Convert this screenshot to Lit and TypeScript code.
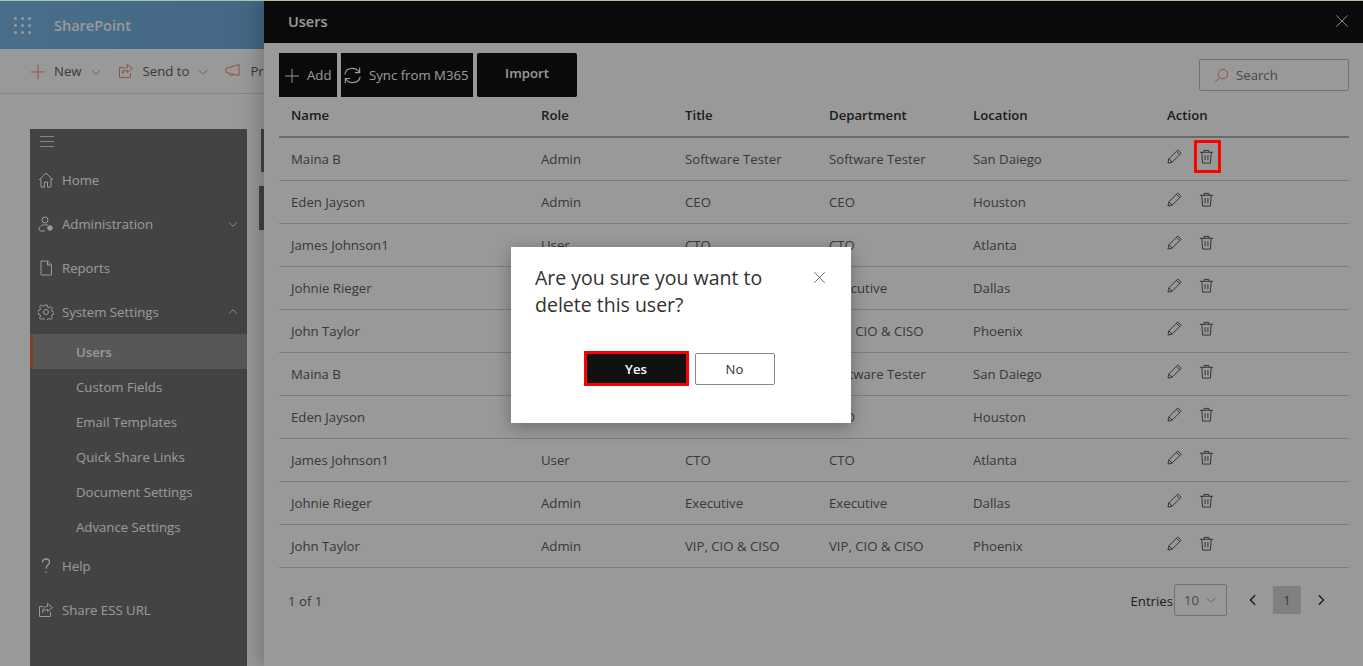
import { html, css, LitElement, svg } from "lit"
import { customElement } from "lit/decorators.js"

const users = [
  ["Maina B", "Admin", "Software Tester", "Software Tester", "San Daiego"],
  ["Eden Jayson", "Admin", "CEO", "CEO", "Houston"],
  ["James Johnson1", "User", "CTO", "CTO", "Atlanta"],
  ["Johnie Rieger", "Admin", "Executive", "Executive", "Dallas"],
  ["John Taylor", "Admin", "VIP, CIO & CISO", "VIP, CIO & CISO", "Phoenix"],
]
const rows = [...users, ...users]

const icon = (body: unknown, size = 16) => html`
  <svg width=${size} height=${size} viewBox="0 0 16 16" fill="none" stroke="currentColor" stroke-width="1">${body}</svg>
`

const icons = {
  plus: svg`<path d="M8.500 1v15M1 8.500h15"/>`,
  chevronDown: svg`<path d="M2.500 5.500L8 11l5.500-5.500"/>`,
  chevronUp: svg`<path d="M2.500 10.500L8 5l5.500 5.500"/>`,
  share: svg`<path d="M12.500 10v4.500h-11v-10h4"/><path d="M9.500 1.500l5 4-5 4V7.500c-2.500 0-4 1-5 3 0-3.500 2-6 5-6z"/>`,
  megaphone: svg`<path d="M1 5.500l13-4v11l-13-3zM4 10c0 3 4 3.500 4.500 1"/>`,
  home: svg`<path d="M1 8l7-7 7 7M3 6.500v8.500h3.500v-5h3v5H13V6.500"/>`,
  admin: svg`<circle cx="7" cy="4" r="3"/><path d="M10 9.300C8 8.300 1.500 8 1 13.500c0 1 1 1.500 2 1.500h4"/><circle cx="12" cy="12" r="2.300" fill="currentColor"/>`,
  page: svg`<path d="M3 1h6.500L13.500 5v10H3zM9.500 1v4h4"/>`,
  gear: svg`<circle cx="8" cy="8" r="2.500"/><path d="M6.800 1h2.400l.4 2 1.500.7 1.800-1.100 1.600 1.700-1.100 1.700.6 1.500 2 .5v2.300l-2 .4-.6 1.500 1.100 1.800-1.600 1.600-1.800-1.100-1.500.6-.4 2H6.800l-.4-2-1.500-.6-1.800 1.100-1.600-1.600 1.100-1.800-.6-1.500-2-.4V6.500l2-.5.6-1.500-1.100-1.700 1.600-1.700 1.800 1.100 1.500-.7z"/>`,
  help: svg`<path d="M4.500 4.500C4.500 2 6 1 8 1s3.500 1.200 3.500 3.200C11.500 7 8 7 8 10.500M8 13.500v1.500" stroke-width="1.300"/>`,
  sync: svg`<path d="M1.500 7C2 4 4.500 2 8 2c2.500 0 4.500 1.200 5.500 3M14.500 9c-.5 3-3 5-6.500 5-2.500 0-4.500-1.200-5.500-3"/><path d="M14 1.500V5.500h-4M2 14.500V10.500h4"/>`,
  search: svg`<circle cx="9.500" cy="6.500" r="5"/><path d="M6 10l-5 5"/>`,
  close: svg`<path d="M1.500 1.500l13 13M14.500 1.500l-13 13"/>`,
  pencil: svg`<path d="M1 15l1-4.500L11.500 1l3.500 3.500L5.500 14zM2 10.500l3.500 3.500M10 2.500L13.500 6"/>`,
  trash: svg`<path d="M1 3.500h14M5.500 3.500V1.500h5v2M3 3.500l.8 11.500h8.400L13 3.500M6.500 6.500v5.500M9.500 6.500v5.500"/>`,
  back: svg`<path d="M10.500 2.500L5 8l5.500 5.500" stroke-width="1.600"/>`,
  next: svg`<path d="M5.500 2.500L11 8l-5.500 5.500" stroke-width="1.600"/>`,
}

@customElement("app-root")
class AppRoot extends LitElement {
  static styles = css`
    :host {
      display: block;
      height: 666px;
      overflow: hidden;
      background: #a9c79c;
      padding-top: 1px;
      box-sizing: border-box;
      font-family: "Open Sans", "Noto Sans", sans-serif;
      font-size: 13.2px;
      color: #605e5c;
    }
    svg { display: block; flex: none; }
    button { font: inherit; border: 0; padding: 0; cursor: pointer; }

    .stage {
      position: relative;
      height: 665px;
      background: #fff;
      overflow: hidden;
    }

    .suite-bar {
      height: 48px;
      display: flex;
      align-items: center;
      padding-left: 14px;
      gap: 23px;
      background: linear-gradient(90deg, #7ab8ea, #5f93c0 60%);
      color: #fff;
    }
    .waffle {
      display: grid;
      grid-template-columns: repeat(3, 3px);
      gap: 4px;
    }
    .waffle i { width: 3px; height: 3px; background: #fff; border-radius: 50%; }
    .brand { font-size: 14.5px; font-weight: 600; }

    .commands {
      height: 44px;
      padding-left: 30px;
      display: flex;
      align-items: center;
      gap: 9px;
      border-bottom: 1px solid #e1dfdd;
      white-space: nowrap;
    }
    .commands .accent { color: #f08a66; }
    .commands .chev { color: #8a8886; margin: 1px 7px 0 -1px; }

    .body { display: flex; padding: 35px 0 0 30px; }

    .sidebar {
      width: 217px;
      height: 540px;
      background: #717171;
      color: #fff;
      flex: none;
    }
    .burger { height: 29px; padding: 7px 0 0 10px; box-sizing: border-box; }
    .burger i { display: block; width: 14px; height: 1px; background: #ddd; margin-bottom: 4px; }
    .nav {
      height: 44px;
      padding: 0 8px 0 8px;
      display: flex;
      align-items: center;
      gap: 8px;
    }
    .nav span { flex: 1; }
    .sub { height: 35px; padding-left: 46px; display: flex; align-items: center; }
    .sub.active {
      padding-left: 43px;
      border-left: 3px solid #d0693f;
      background: #919191;
      font-weight: 600;
    }

    .behind { margin-left: 14px; flex: 1; }
    .behind i { display: block; height: 43px; width: 20px; background: #717171; }
    .behind i + i { margin: 14px 0 0 -2px; height: 44px; }

    .panel {
      position: absolute;
      top: 0;
      right: 0;
      bottom: 0;
      width: 1099px;
      background: #fff;
      box-shadow: -6px 0 18px rgba(0, 0, 0, 0.22);
    }
    .panel-head {
      height: 42px;
      background: #111;
      color: #fff;
      padding: 0 14px 2px 24px;
      box-sizing: border-box;
      display: flex;
      align-items: center;
      justify-content: space-between;
      font-size: 14.5px;
      font-weight: 600;
    }
    .content { padding: 10px 14px 0 15px; }

    .toolbar { display: flex; gap: 4px; height: 44px; align-items: stretch; }
    .tool {
      background: #111;
      color: #fff;
      display: flex;
      align-items: center;
      white-space: nowrap;
      box-sizing: border-box;
    }
    .tool.add { width: 58px; gap: 8px; padding-left: 5px; }
    .tool.sync { width: 132px; gap: 7px; padding-left: 2px; }
    .tool.import {
      width: 100px;
      justify-content: center;
      font-weight: 600;
      border-radius: 2px;
      padding-bottom: 4px;
    }
    .search {
      margin: 6px 0 0 auto;
      width: 150px;
      height: 32px;
      box-sizing: border-box;
      border: 1px solid #bdbdbd;
      border-radius: 2px;
      display: flex;
      align-items: center;
      gap: 7px;
      padding-left: 14px;
      color: #777;
    }
    .search svg { color: #f08a66; }

    table { width: 100%; border-collapse: collapse; table-layout: fixed; }
    th {
      height: 40px;
      padding: 0 0 4px 12px;
      box-sizing: border-box;
      text-align: left;
      font-weight: 600;
      color: #323130;
      border-bottom: 2px solid #b5b0b0;
    }
    td {
      height: 42px;
      padding: 0 0 0 12px;
      border-bottom: 1px solid #d2d0d0;
      white-space: nowrap;
    }
    .actions {
      display: flex;
      align-items: center;
      gap: 17px;
      margin: -6px 0 0 0;
      color: #4d4d4d;
    }

    .pager {
      display: flex;
      align-items: center;
      height: 66px;
      padding-left: 9px;
    }
    .pager .count { flex: 1; }
    .entries { color: #323130; margin-right: 1px; }
    .select {
      width: 53px;
      height: 32px;
      margin-top: -2px;
      box-sizing: border-box;
      border: 1px solid #bdbdbd;
      border-radius: 2px;
      display: flex;
      align-items: center;
      justify-content: space-between;
      padding: 0 9px;
      color: #777;
    }
    .select svg { color: #888; }
    .page-arrow { color: #323130; margin: -2px 13px 0 19px; }
    .page-arrow.right { margin: -2px 21px 0 13px; }
    .page-now {
      width: 28px;
      height: 28px;
      margin-top: -2px;
      background: #d5d5d5;
      color: #605e5c;
      display: flex;
      align-items: center;
      justify-content: center;
    }

    .scrim {
      position: absolute;
      inset: 0;
      background: rgba(0, 0, 0, 0.4);
    }

    .mark {
      position: absolute;
      left: 1194px;
      top: 139px;
      width: 27px;
      height: 33px;
      box-sizing: border-box;
      border: 3px solid #ff0000;
      border-radius: 1px;
    }

    .dialog {
      position: absolute;
      left: 511px;
      top: 246px;
      width: 340px;
      height: 176px;
      box-sizing: border-box;
      padding: 17px 24px 0;
      background: #fff;
      box-shadow: 0 4px 16px rgba(0, 0, 0, 0.3);
      color: #323130;
    }
    .dialog-head { display: flex; justify-content: space-between; align-items: flex-start; }
    .dialog h2 {
      margin: 0;
      width: 250px;
      font-size: 19.5px;
      line-height: 27px;
      font-weight: 400;
    }
    .dialog-head svg { margin: 7px 1px 0 0; color: #555; }
    .dialog-actions {
      display: flex;
      justify-content: center;
      align-items: center;
      gap: 6px;
      margin-top: 33px;
      padding-right: 4px;
    }
    .yes, .no {
      display: flex;
      align-items: center;
      justify-content: center;
      box-sizing: border-box;
    }
    .yes {
      width: 105px;
      height: 35px;
      background: #111;
      color: #fff;
      font-weight: 600;
      border: 3px solid #ff0000;
    }
    .no {
      width: 80px;
      height: 32px;
      background: #fff;
      color: #323130;
      border: 1px solid #8a8886;
      border-radius: 2px;
    }
  `

  render() {
    return html`
      <div class="stage">
        ${this.renderPage()}
        ${this.renderPanel()}
        <div class="scrim"></div>
        <div class="mark"></div>
        <div class="dialog">
          <div class="dialog-head">
            <h2>Are you sure you want to delete this user?</h2>
            ${icon(icons.close, 13)}
          </div>
          <div class="dialog-actions">
            <button class="yes">Yes</button>
            <button class="no">No</button>
          </div>
        </div>
      </div>
    `
  }

  renderPage() {
    return html`
      <div class="suite-bar">
        <div class="waffle">${Array.from({ length: 9 }, () => html`<i></i>`)}</div>
        <div class="brand">SharePoint</div>
      </div>
      <div class="commands">
        <span class="accent">${icon(icons.plus, 15)}</span>
        <span>New</span>
        <span class="chev">${icon(icons.chevronDown, 12)}</span>
        <span class="accent">${icon(icons.share)}</span>
        <span>Send to</span>
        <span class="chev">${icon(icons.chevronDown, 12)}</span>
        <span class="accent">${icon(icons.megaphone)}</span>
        <span>Promote</span>
      </div>
      <div class="body">
        <nav class="sidebar">
          <div class="burger"><i></i><i></i><i></i></div>
          <div class="nav">${icon(icons.home)}<span>Home</span></div>
          <div class="nav">${icon(icons.admin)}<span>Administration</span>${icon(icons.chevronDown, 12)}</div>
          <div class="nav">${icon(icons.page)}<span>Reports</span></div>
          <div class="nav">${icon(icons.gear)}<span>System Settings</span>${icon(icons.chevronUp, 12)}</div>
          <div class="sub active">Users</div>
          <div class="sub">Custom Fields</div>
          <div class="sub">Email Templates</div>
          <div class="sub">Quick Share Links</div>
          <div class="sub">Document Settings</div>
          <div class="sub">Advance Settings</div>
          <div class="nav">${icon(icons.help)}<span>Help</span></div>
          <div class="nav">${icon(icons.share)}<span>Share ESS URL</span></div>
        </nav>
        <div class="behind"><i></i><i></i></div>
      </div>
    `
  }

  renderPanel() {
    return html`
      <section class="panel">
        <header class="panel-head">
          <span>Users</span>
          ${icon(icons.close, 14)}
        </header>
        <div class="content">
          <div class="toolbar">
            <button class="tool add">${icon(icons.plus, 15)}Add</button>
            <button class="tool sync">${icon(icons.sync, 19)}Sync from M365</button>
            <button class="tool import">Import</button>
            <div class="search">${icon(icons.search, 15)}Search</div>
          </div>
          <table>
            <colgroup>
              <col style="width:250px" /><col style="width:144px" /><col style="width:144px" />
              <col style="width:144px" /><col style="width:194px" /><col />
            </colgroup>
            <thead>
              <tr><th>Name</th><th>Role</th><th>Title</th><th>Department</th><th>Location</th><th>Action</th></tr>
            </thead>
            <tbody>
              ${rows.map((row) => html`
                <tr>
                  ${row.map((cell) => html`<td>${cell}</td>`)}
                  <td>
                    <div class="actions">
                      ${icon(icons.pencil, 15)}
                      ${icon(icons.trash, 15)}
                    </div>
                  </td>
                </tr>
              `)}
            </tbody>
          </table>
          <div class="pager">
            <span class="count">1 of 1</span>
            <span class="entries">Entries</span>
            <div class="select">10 ${icon(icons.chevronDown, 12)}</div>
            <span class="page-arrow">${icon(icons.back, 14)}</span>
            <span class="page-now">1</span>
            <span class="page-arrow right">${icon(icons.next, 14)}</span>
          </div>
        </div>
      </section>
    `
  }
}
